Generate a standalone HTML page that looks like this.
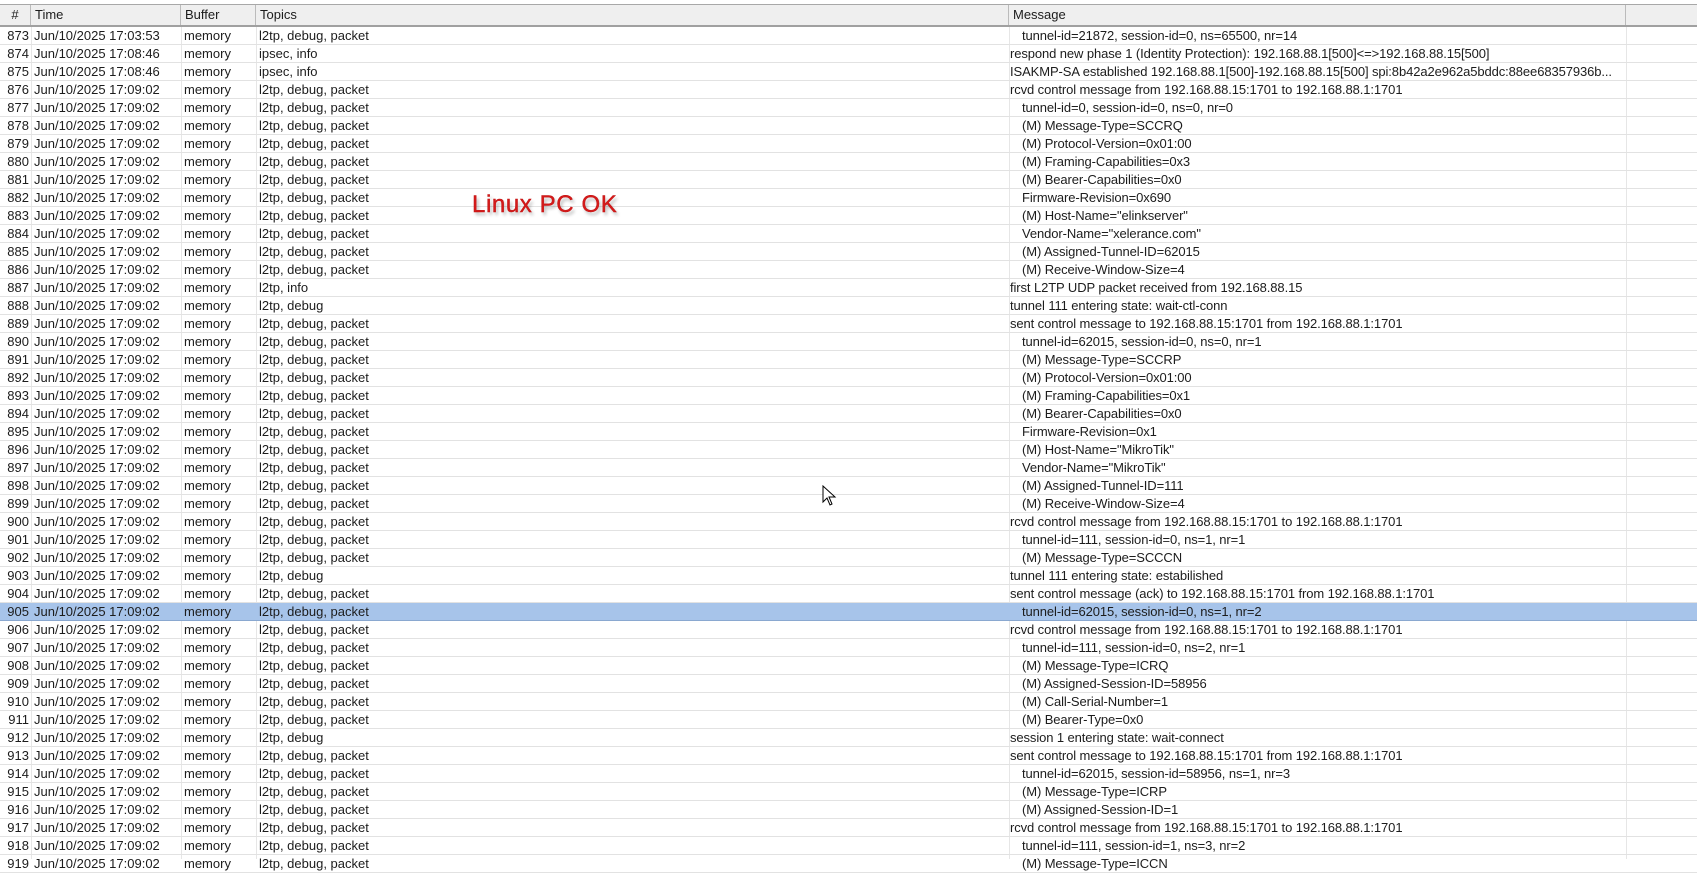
<!DOCTYPE html><html><head><meta charset="utf-8"><style>
body{margin:0;width:1697px;height:859px;overflow:hidden;background:#fff;font-family:"Liberation Sans",Arial,sans-serif;font-size:13px;color:#1c1c1c;position:relative}
.hdr{position:absolute;left:0;top:4px;width:1697px;height:20px;background:#efefef;border-top:1px solid #a8a8a8;border-bottom:2px solid #a0a0a0}
.hdr div{position:absolute;top:0;height:20px;line-height:20px;border-right:1px solid #bbb;padding-left:4px;box-sizing:border-box}
.r{position:absolute;left:0;width:1697px;height:18px;line-height:18px;border-bottom:1px solid #e2e2e2;box-sizing:border-box;white-space:nowrap}
.r span{position:absolute;top:0}
.n{left:0;width:29px;text-align:right}
.t{left:34px}.b{left:184px}.p{left:259px}.m{left:1010px;letter-spacing:-0.1px}.i{left:1022px;letter-spacing:-0.1px}
.v{position:absolute;top:27px;bottom:0;width:1px;background:#e6e6e6}
.sel{background:#a7c4ea;border-bottom:1px solid #8aa8d0}
</style></head><body>
<div class="hdr"><div style="left:0;width:31px;text-align:center;padding:0">#</div><div style="left:31px;width:150px">Time</div><div style="left:181px;width:75px">Buffer</div><div style="left:256px;width:753px">Topics</div><div style="left:1009px;width:617px">Message</div></div>
<div class="v" style="left:31px"></div><div class="v" style="left:181px"></div><div class="v" style="left:256px"></div><div class="v" style="left:1009px"></div><div class="v" style="left:1626px"></div>
<div id="rows"></div>
<div style="position:absolute;left:472px;top:191px;font-size:24px;letter-spacing:0.6px;color:#d41a1a;-webkit-text-stroke:0.4px #c01010;text-shadow:2px 3px 3px rgba(0,0,0,.3)">Linux PC OK</div>
<svg style="position:absolute;left:822px;top:485px" width="16" height="22"><path d="M1 1 L1 17 L5 13 L8 20 L10 19 L7 12 L13 12 Z" fill="#fff" stroke="#000" stroke-width="1"/></svg>
<script>
const d=[
["873","17:03:53","l2tp, debug, packet","i","tunnel-id=21872, session-id=0, ns=65500, nr=14"],
["874","17:08:46","ipsec, info","m","respond new phase 1 (Identity Protection): 192.168.88.1[500]<=>192.168.88.15[500]"],
["875","17:08:46","ipsec, info","m","ISAKMP-SA established 192.168.88.1[500]-192.168.88.15[500] spi:8b42a2e962a5bddc:88ee68357936b..."],
["876","","l2tp, debug, packet","m","rcvd control message from 192.168.88.15:1701 to 192.168.88.1:1701"],
["877","","l2tp, debug, packet","i","tunnel-id=0, session-id=0, ns=0, nr=0"],
["878","","l2tp, debug, packet","i","(M) Message-Type=SCCRQ"],
["879","","l2tp, debug, packet","i","(M) Protocol-Version=0x01:00"],
["880","","l2tp, debug, packet","i","(M) Framing-Capabilities=0x3"],
["881","","l2tp, debug, packet","i","(M) Bearer-Capabilities=0x0"],
["882","","l2tp, debug, packet","i","Firmware-Revision=0x690"],
["883","","l2tp, debug, packet","i","(M) Host-Name=\"elinkserver\""],
["884","","l2tp, debug, packet","i","Vendor-Name=\"xelerance.com\""],
["885","","l2tp, debug, packet","i","(M) Assigned-Tunnel-ID=62015"],
["886","","l2tp, debug, packet","i","(M) Receive-Window-Size=4"],
["887","","l2tp, info","m","first L2TP UDP packet received from 192.168.88.15"],
["888","","l2tp, debug","m","tunnel 111 entering state: wait-ctl-conn"],
["889","","l2tp, debug, packet","m","sent control message to 192.168.88.15:1701 from 192.168.88.1:1701"],
["890","","l2tp, debug, packet","i","tunnel-id=62015, session-id=0, ns=0, nr=1"],
["891","","l2tp, debug, packet","i","(M) Message-Type=SCCRP"],
["892","","l2tp, debug, packet","i","(M) Protocol-Version=0x01:00"],
["893","","l2tp, debug, packet","i","(M) Framing-Capabilities=0x1"],
["894","","l2tp, debug, packet","i","(M) Bearer-Capabilities=0x0"],
["895","","l2tp, debug, packet","i","Firmware-Revision=0x1"],
["896","","l2tp, debug, packet","i","(M) Host-Name=\"MikroTik\""],
["897","","l2tp, debug, packet","i","Vendor-Name=\"MikroTik\""],
["898","","l2tp, debug, packet","i","(M) Assigned-Tunnel-ID=111"],
["899","","l2tp, debug, packet","i","(M) Receive-Window-Size=4"],
["900","","l2tp, debug, packet","m","rcvd control message from 192.168.88.15:1701 to 192.168.88.1:1701"],
["901","","l2tp, debug, packet","i","tunnel-id=111, session-id=0, ns=1, nr=1"],
["902","","l2tp, debug, packet","i","(M) Message-Type=SCCCN"],
["903","","l2tp, debug","m","tunnel 111 entering state: estabilished"],
["904","","l2tp, debug, packet","m","sent control message (ack) to 192.168.88.15:1701 from 192.168.88.1:1701"],
["905","","l2tp, debug, packet","i","tunnel-id=62015, session-id=0, ns=1, nr=2"],
["906","","l2tp, debug, packet","m","rcvd control message from 192.168.88.15:1701 to 192.168.88.1:1701"],
["907","","l2tp, debug, packet","i","tunnel-id=111, session-id=0, ns=2, nr=1"],
["908","","l2tp, debug, packet","i","(M) Message-Type=ICRQ"],
["909","","l2tp, debug, packet","i","(M) Assigned-Session-ID=58956"],
["910","","l2tp, debug, packet","i","(M) Call-Serial-Number=1"],
["911","","l2tp, debug, packet","i","(M) Bearer-Type=0x0"],
["912","","l2tp, debug","m","session 1 entering state: wait-connect"],
["913","","l2tp, debug, packet","m","sent control message to 192.168.88.15:1701 from 192.168.88.1:1701"],
["914","","l2tp, debug, packet","i","tunnel-id=62015, session-id=58956, ns=1, nr=3"],
["915","","l2tp, debug, packet","i","(M) Message-Type=ICRP"],
["916","","l2tp, debug, packet","i","(M) Assigned-Session-ID=1"],
["917","","l2tp, debug, packet","m","rcvd control message from 192.168.88.15:1701 to 192.168.88.1:1701"],
["918","","l2tp, debug, packet","i","tunnel-id=111, session-id=1, ns=3, nr=2"],
["919","","l2tp, debug, packet","i","(M) Message-Type=ICCN"]];
const esc=s=>s.replace(/&/g,"&amp;").replace(/</g,"&lt;").replace(/>/g,"&gt;");
let h="";d.forEach((r,k)=>{h+=`<div class="r${r[0]=="905"?" sel":""}" style="top:${27+k*18}px"><span class="n">${r[0]}</span><span class="t">Jun/10/2025 ${r[1]||"17:09:02"}</span><span class="b">memory</span><span class="p">${r[2]}</span><span class="${r[3]}">${esc(r[4])}</span></div>`});
document.getElementById("rows").innerHTML=h;
</script></body></html>
